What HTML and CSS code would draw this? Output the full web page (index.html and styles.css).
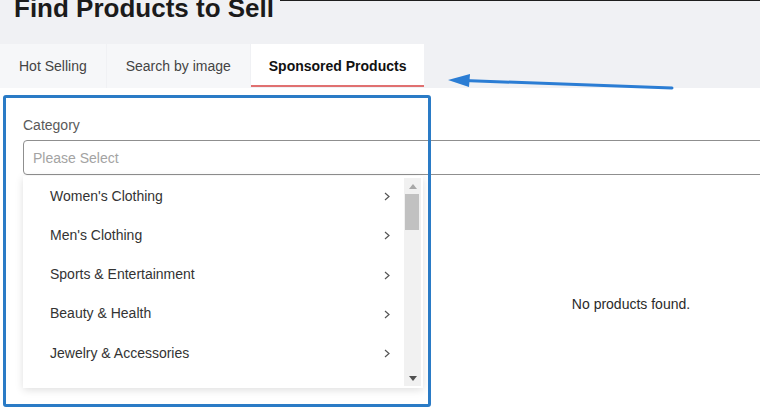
FILE: index.html
```html
<!DOCTYPE html>
<html>
<head>
<meta charset="utf-8">
<link rel="stylesheet" href="styles.css">
</head>
<body>
<div class="page">
  <header class="header">
    <div class="title-row">
      <h1 class="title">Find Products to Sell</h1>
      <div class="top-rule"></div>
    </div>
    <nav class="tabs">
      <div class="tab">Hot Selling</div>
      <div class="tab">Search by image</div>
      <div class="tab tab-active">Sponsored Products</div>
    </nav>
  </header>

  <main class="main">
    <div class="label">Category</div>
    <div class="select">
      <div class="select-input">Please Select</div>
      <div class="dropdown">
        <ul class="options">
          <li class="option"><span>Women's Clothing</span><svg class="chev" width="6" height="9" viewBox="0 0 6 9"><polyline points="1,1 5,4.5 1,8" fill="none" stroke="#555" stroke-width="1.2"/></svg></li>
          <li class="option"><span>Men's Clothing</span><svg class="chev" width="6" height="9" viewBox="0 0 6 9"><polyline points="1,1 5,4.5 1,8" fill="none" stroke="#555" stroke-width="1.2"/></svg></li>
          <li class="option"><span>Sports &amp; Entertainment</span><svg class="chev" width="6" height="9" viewBox="0 0 6 9"><polyline points="1,1 5,4.5 1,8" fill="none" stroke="#555" stroke-width="1.2"/></svg></li>
          <li class="option"><span>Beauty &amp; Health</span><svg class="chev" width="6" height="9" viewBox="0 0 6 9"><polyline points="1,1 5,4.5 1,8" fill="none" stroke="#555" stroke-width="1.2"/></svg></li>
          <li class="option"><span>Jewelry &amp; Accessories</span><svg class="chev" width="6" height="9" viewBox="0 0 6 9"><polyline points="1,1 5,4.5 1,8" fill="none" stroke="#555" stroke-width="1.2"/></svg></li>
        </ul>
        <div class="scrollbar">
          <div class="sb-btn"><svg width="8" height="5" viewBox="0 0 8 5"><polygon points="0,5 8,5 4,0" fill="#a8a8a8"/></svg></div>
          <div class="sb-track"><div class="sb-thumb"></div></div>
          <div class="sb-btn"><svg width="8" height="5" viewBox="0 0 8 5"><polygon points="0,0 8,0 4,5" fill="#505050"/></svg></div>
        </div>
      </div>
    </div>
    <div class="empty">No products found.</div>
  </main>

  <div class="highlight-box"></div>
  <svg class="arrow" width="250" height="35" viewBox="0 0 250 35">
    <line x1="24" y1="15.5" x2="232" y2="23" stroke="#2b7dd4" stroke-width="3" stroke-linecap="round"/>
    <polygon points="8,15 30,9 29,22" fill="#2b7dd4"/>
  </svg>
</div>
</body>
</html>
```

FILE: styles.css
```css
html, body {
  margin: 0;
  padding: 0;
  background: #ffffff;
  overflow: hidden;
}

body {
  font-family: "Liberation Sans", Arial, sans-serif;
  color: #333;
}

.page {
  position: relative;
  width: 760px;
  height: 418px;
  overflow: hidden;
}

.header {
  display: flex;
  flex-direction: column;
  background: #f0f1f4;
  height: 88px;
}

.title-row {
  display: flex;
  align-items: flex-start;
  height: 44px;
}

.title {
  margin: -5px 0 0 0;
  padding-left: 14px;
  font-size: 26px;
  line-height: 26px;
  font-weight: bold;
  color: #1b1b1b;
  white-space: nowrap;
}

.top-rule {
  flex: 1;
  margin-left: 6px;
  border-top: 1.5px solid #1e1e1e;
}

.tabs {
  display: flex;
  height: 44px;
}

.tab {
  display: flex;
  align-items: center;
  padding: 0 19px;
  margin-right: 1px;
  background: #f6f7f9;
  font-size: 14px;
  color: #444;
  white-space: nowrap;
  box-sizing: border-box;
}

.tab-active {
  background: #ffffff;
  padding: 2px 18px 0 18px;
  font-weight: bold;
  color: #111;
  border-bottom: 2px solid #e07070;
  height: 43px;
}

.main {
  width: 1216px;
  padding: 27px 0 0 23px;
}

.label {
  font-size: 14px;
  line-height: 20px;
  color: #5a5a5a;
  margin-bottom: 5px;
}

.select {
  position: relative;
}

.select-input {
  box-sizing: border-box;
  height: 35px;
  border: 1px solid #8f8f8f;
  border-radius: 4px;
  padding-left: 9px;
  display: flex;
  align-items: center;
  font-size: 14px;
  color: #a3a3a3;
}

.dropdown {
  position: absolute;
  top: calc(100% + 1px);
  left: 0;
  width: 400px;
  height: 212px;
  background: #fff;
  box-shadow: 0 2px 8px rgba(0, 0, 0, 0.13);
  display: flex;
  overflow: hidden;
  z-index: 2;
}

.options {
  flex: 1;
  list-style: none;
  margin: 0;
  padding: 0;
  overflow: hidden;
}

.option {
  height: 39.25px;
  display: flex;
  align-items: center;
  justify-content: space-between;
  padding: 0 14px 0 27px;
  font-size: 14px;
  color: #333;
}

.chev {
  display: block;
  margin-top: 2px;
}

.scrollbar {
  width: 17px;
  margin: 2px 2px 2px 0;
  background: #f1f1f1;
  display: flex;
  flex-direction: column;
}

.sb-btn {
  height: 16px;
  display: flex;
  align-items: center;
  justify-content: center;
}

.sb-track {
  flex: 1;
  padding: 0 2px 0 1px;
}

.sb-thumb {
  height: 36px;
  background: #c1c1c1;
}

.empty {
  margin-top: 119px;
  text-align: center;
  font-size: 14px;
  line-height: 20px;
  color: #2a2a2a;
}

.highlight-box {
  position: absolute;
  left: 3px;
  top: 95px;
  width: 422px;
  height: 306px;
  border: 3px solid #2a7bc6;
  border-radius: 3px;
  z-index: 3;
}

.arrow {
  position: absolute;
  left: 440px;
  top: 65px;
  z-index: 3;
}
```
